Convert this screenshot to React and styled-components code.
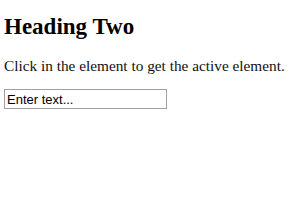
import React from "react";
import styled, { createGlobalStyle } from "styled-components";

const GlobalStyle = createGlobalStyle`
  body {
    margin: 4px;
    background: #ffffff;
    font-family: "Liberation Serif", "Times New Roman", serif;
    color: #000;
  }
`;

const Heading = styled.h2`
  font-size: 23px;
  font-weight: bold;
  margin: 10px 0 17px;
`;

const Text = styled.p`
  font-size: 15.3px;
  margin: 0 0 14px;
  color: #111;
  white-space: nowrap;
`;

const TextInput = styled.input`
  box-sizing: border-box;
  width: 163px;
  height: 20px;
  padding: 1px 2px;
  border: 1px solid #a0a0a0;
  font-family: "Liberation Sans", Arial, sans-serif;
  font-size: 13px;
  color: #000;
  outline: none;
`;

const App = () => {
  return (
    <>
      <GlobalStyle />
      <Heading>Heading Two</Heading>
      <Text>Click in the element to get the active element.</Text>
      <TextInput type="text" defaultValue="Enter text..." />
    </>
  );
};

export default App;
